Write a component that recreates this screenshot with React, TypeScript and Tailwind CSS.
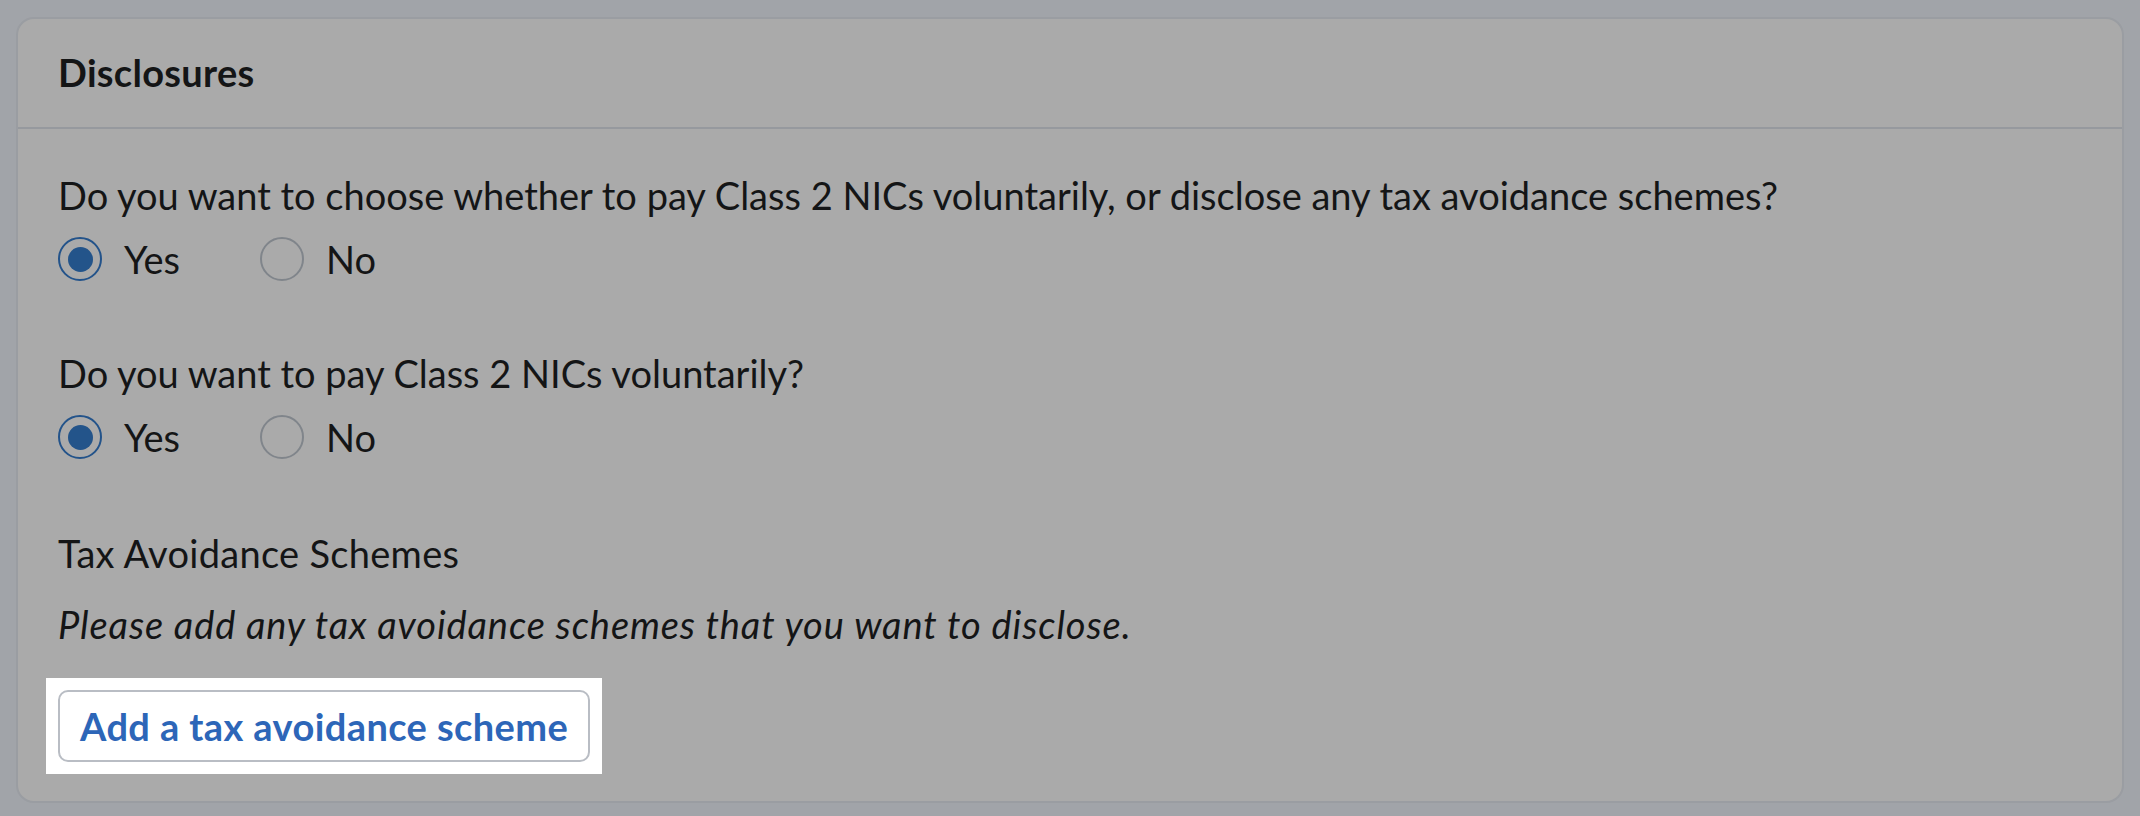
import { useState } from "react";

const FONT = { fontFamily: "Lato, 'Open Sans', sans-serif" };

function Radio({ checked, label, onClick }: { checked: boolean; label: string; onClick: () => void }) {
  return (
    <button type="button" onClick={onClick} className="flex items-center gap-[22px] cursor-pointer">
      <span
        className={`flex items-center justify-center w-[44px] h-[44px] rounded-full border-2 ${
          checked ? "border-[#23538a]" : "border-[#80858b]"
        }`}
      >
        {checked && <span className="w-[25px] h-[25px] rounded-full bg-[#23548a]" />}
      </span>
      <span className="text-[38px] leading-none text-[#141516]">{label}</span>
    </button>
  );
}

function YesNo({ question, value, onChange }: { question: string; value: boolean; onChange: (v: boolean) => void }) {
  return (
    <div className="flex flex-col">
      <p className="text-[38px] leading-[44px] text-[#141516]">{question}</p>
      <div className="flex items-center gap-[80px] mt-[20px]">
        <Radio checked={value} label="Yes" onClick={() => onChange(true)} />
        <Radio checked={!value} label="No" onClick={() => onChange(false)} />
      </div>
    </div>
  );
}

export default function App() {
  const [disclose, setDisclose] = useState(true);
  const [class2, setClass2] = useState(true);

  return (
    <div className="w-[2140px] h-[816px] bg-[#a1a4a9] px-[16px] pt-[17px]" style={FONT}>
      <div className="h-[786px] rounded-[18px] border-2 border-[#9a9da2] bg-[#aaaaaa] flex flex-col">
        <div className="h-[110px] border-b-2 border-[#96999e] px-[40px] flex items-center">
          <h2 className="text-[38px] font-bold text-[#141516] leading-none pb-[2px] tracking-[0.3px]">Disclosures</h2>
        </div>
        <div className="px-[40px] pt-[44px] flex flex-col">
          <YesNo
            question="Do you want to choose whether to pay Class 2 NICs voluntarily, or disclose any tax avoidance schemes?"
            value={disclose}
            onChange={setDisclose}
          />
          <div className="mt-[70px]">
            <YesNo question="Do you want to pay Class 2 NICs voluntarily?" value={class2} onChange={setClass2} />
          </div>
          <p className="mt-[72px] text-[38px] leading-[44px] text-[#141516] tracking-[0.3px]">Tax Avoidance Schemes</p>
          <p className="mt-[27px] text-[38px] leading-[44px] italic text-[#141516] tracking-[0.9px]">
            Please add any tax avoidance schemes that you want to disclose.
          </p>
          <div className="mt-[32px] -ml-[12px] self-start bg-white p-[12px]">
            <button
              type="button"
              className="h-[72px] px-[20px] rounded-[10px] border-2 border-[#b9bdc4] bg-white text-[38px] font-bold text-[#2d66b8] leading-none tracking-[0.4px] cursor-pointer"
            >
              Add a tax avoidance scheme
            </button>
          </div>
        </div>
      </div>
    </div>
  );
}
